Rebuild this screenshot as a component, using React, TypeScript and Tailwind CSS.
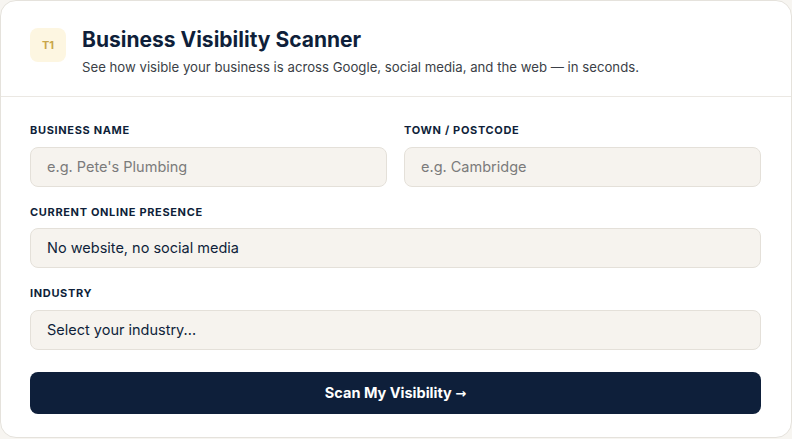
export default function App() {
  const field =
    "h-10 w-full rounded-lg border border-[#e4e0d9] bg-[#f6f3ee] px-4 text-[14.5px] text-[#0f1f3a] outline-none placeholder:text-[#7b7b7b]";
  const label =
    "mb-2 block text-[11px] font-bold uppercase leading-[16.5px] tracking-[0.06em] text-[#0f1f3a]";
  return (
    <div className="min-h-screen bg-[#f7f5f1] font-['Inter',sans-serif]">
      <div className="h-[438px] w-[792px] overflow-hidden rounded-2xl border border-[#e5e2dc] bg-white">
        <div className="flex items-start gap-4 border-b border-[#ebe8e3] pb-[19px] pl-[29px] pr-[30px] pt-[25px]">
          <div className="mt-[2px] grid h-[34px] w-9 place-items-center rounded-lg bg-[#fdf6e1] text-[11px] font-bold text-[#c9a64a]">
            T1
          </div>
          <div>
            <h1 className="text-[21px] font-bold leading-7 text-[#0f1f3a]">
              Business Visibility Scanner
            </h1>
            <p className="mt-[3px] text-[13.2px] leading-5 text-[#3b3f47]">
              See how visible your business is across Google, social media, and
              the web — in seconds.
            </p>
          </div>
        </div>
        <form className="pl-[29px] pr-[30px] pt-[25px]">
          <div className="grid grid-cols-2 gap-[17px]">
            <div>
              <label className={label}>Business name</label>
              <input className={field} placeholder="e.g. Pete's Plumbing" />
            </div>
            <div>
              <label className={label}>Town / Postcode</label>
              <input className={field} placeholder="e.g. Cambridge" />
            </div>
          </div>
          <div className="mt-[17px]">
            <label className={label}>Current online presence</label>
            <div className={field + " flex items-center"}>
              No website, no social media
            </div>
          </div>
          <div className="mt-[17px]">
            <label className={label}>Industry</label>
            <div className={field + " flex items-center"}>
              Select your industry...
            </div>
          </div>
          <button
            type="button"
            className="mt-[22px] h-[42px] w-full rounded-lg bg-[#0e1f3a] text-[14.5px] font-bold text-white"
          >
            Scan My Visibility{" "}
            <span className="font-['DejaVu_Sans',sans-serif] text-[13px]">→</span>
          </button>
        </form>
      </div>
    </div>
  );
}
